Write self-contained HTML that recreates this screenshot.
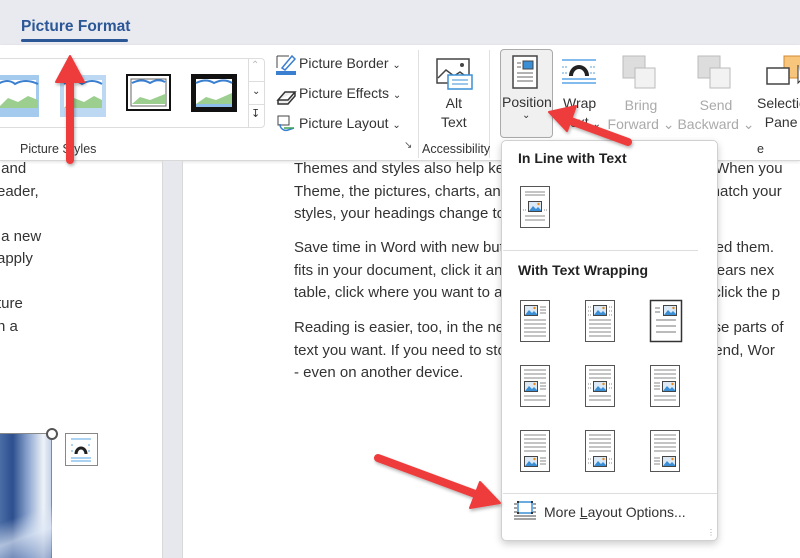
<!DOCTYPE html>
<html><head><meta charset="utf-8"><style>
*{margin:0;padding:0;box-sizing:border-box}
body{width:800px;height:558px;overflow:hidden;position:relative;background:#fff;font-family:"Liberation Sans",sans-serif;color:#262626}
.abs{position:absolute}
.tabbar{left:0;top:0;width:800px;height:45px;background:#e9eaef}
.ribbon{left:0;top:45px;width:800px;height:116px;background:#fff;border-bottom:1px solid #d8d8d8;box-shadow:0 1px 3px rgba(0,0,0,.12)}
.lbl{font-size:12.5px;color:#333}
.doc{font-size:15px;color:#333;line-height:22.5px;white-space:nowrap}
.menu{left:501px;top:140px;width:217px;height:401px;background:#fff;border:1px solid #d0d0d0;border-radius:5px;box-shadow:0 3px 8px rgba(0,0,0,.2)}
.h{font-weight:bold;font-size:14px;color:#222}
</style></head><body>
<svg width="0" height="0" style="position:absolute"><defs>
<symbol id="pg" viewBox="0 0 30 42"><rect x="0.5" y="0.5" width="29" height="41" fill="#fff" stroke="#555"/></symbol>
<symbol id="pic" viewBox="0 0 14 11"><rect x="0.5" y="0.5" width="13" height="10" fill="#dbe9f7" stroke="#444"/><path d="M1 10 L5 5 L8 8 L10 6 L13 9 L13 10Z" fill="#3a8fd6"/><circle cx="10.5" cy="3" r="1.2" fill="#e98a1d"/></symbol>
</defs></svg>

<div class="abs tabbar"></div>
<div class="abs" style="left:21px;top:18px;font-size:15.5px;font-weight:bold;color:#2b5797">Picture Format</div>
<div class="abs" style="left:21px;top:39px;width:107px;height:3px;background:#2b5797;border-radius:2px"></div>

<div class="abs ribbon"></div>
<div class="abs" style="left:-5px;top:58px;width:270px;height:70px;border:1px solid #ddd;border-radius:4px"></div>
<div class="abs" style="left:248px;top:58px;width:1px;height:70px;background:#ddd"></div>
<div class="abs" style="left:249px;top:81px;width:16px;height:1px;background:#ddd"></div>
<div class="abs" style="left:249px;top:104px;width:16px;height:1px;background:#ddd"></div>
<div class="abs" style="left:251px;top:60px;font-size:10px;color:#bbb">&#8963;</div>
<div class="abs" style="left:252px;top:86px;font-size:10px;color:#333">&#8964;</div>
<div class="abs" style="left:251px;top:107px;font-size:11px;color:#333">&#8615;</div>
<svg class="abs" style="left:0;top:70px" width="245" height="52">
<rect x="-2" y="5" width="41" height="42" fill="#8dbde9" opacity=".8"/>
<rect x="-2" y="10" width="38" height="28" fill="#fff"/><path d="M-2 38 L8 28 18 32 28 26 38 30 38 38Z" fill="#9ccf8f"/><path d="M-2 14 Q8 8 15 14 Q25 8 38 14" stroke="#3a7fd0" fill="none" stroke-width="2"/>
<rect x="60" y="5" width="46" height="42" fill="#9fc8ee" opacity=".7"/>
<rect x="64" y="10" width="38" height="28" fill="#fff"/><path d="M64 38 L74 28 84 32 94 26 102 30 102 38Z" fill="#9ccf8f"/><path d="M64 14 Q74 8 82 14 Q92 8 102 14" stroke="#3a7fd0" fill="none" stroke-width="2"/>
<rect x="127" y="5" width="43" height="35" fill="#fff" stroke="#111" stroke-width="2"/><rect x="131" y="9" width="35" height="27" fill="#fff" stroke="#666"/><path d="M132 34 L140 27 150 30 165 24 165 34Z" fill="#9ccf8f"/><path d="M132 13 Q142 8 150 13 Q158 8 165 12" stroke="#3a7fd0" fill="none" stroke-width="2"/>
<rect x="191" y="4" width="46" height="38" fill="#111"/><rect x="196" y="9" width="36" height="28" fill="#fff"/><path d="M196 34 L206 27 216 30 232 23 232 34Z" fill="#9ccf8f"/><rect x="196" y="34" width="36" height="3" fill="#8dbde9"/><path d="M196 13 Q206 8 214 13 Q224 8 232 13" stroke="#3a7fd0" fill="none" stroke-width="2"/>
</svg>
<div class="abs lbl" style="left:20px;top:142px">Picture Styles</div>

<svg class="abs" style="left:274px;top:52px" width="24" height="80">
<path d="M3 4 H15 M3 4 V16" stroke="#444" fill="none"/><path d="M8 16 L18 4 L21 7 L11 18Z" stroke="#3a7fd0" fill="#fff" stroke-width="1.5"/><rect x="2" y="19" width="20" height="4" fill="#3a7fd0"/>
<path d="M4 48 L11 40 H21 L14 48Z M4 48 V52 H14 L21 44 V40" stroke="#333" fill="#eee" stroke-width="1.5"/>
<rect x="4" y="64" width="11" height="9" fill="#fff" stroke="#444"/><path d="M6 72 A6 6 0 0 0 14 78 L20 76" stroke="#3a7fd0" fill="none" stroke-width="1.5"/><path d="M10 76 L20 76" stroke="#3aa655" stroke-width="1.5"/>
</svg>
<div class="abs" style="left:299px;top:55px;font-size:14px;color:#333">Picture Border <span style="font-size:10px">&#8964;</span></div>
<div class="abs" style="left:299px;top:85px;font-size:14px;color:#333">Picture Effects <span style="font-size:10px">&#8964;</span></div>
<div class="abs" style="left:299px;top:115px;font-size:14px;color:#333">Picture Layout <span style="font-size:10px">&#8964;</span></div>
<div class="abs" style="left:404px;top:140px;font-size:10px;color:#555">&#8600;</div>
<div class="abs" style="left:418px;top:50px;width:1px;height:108px;background:#e0e0e0"></div>
<div class="abs" style="left:489px;top:50px;width:1px;height:108px;background:#e0e0e0"></div>

<svg class="abs" style="left:436px;top:58px" width="38" height="34"><rect x="1" y="1" width="32" height="24" fill="#fff" stroke="#444" stroke-width="1.5"/><path d="M2 20 L10 12 18 18 24 14 32 20" stroke="#444" fill="none" stroke-width="1.5"/><circle cx="26" cy="7" r="2" fill="#444"/><rect x="12" y="17" width="24" height="14" fill="#fff" stroke="#3a8fd6" stroke-width="1.5"/><path d="M16 22 H32 M16 26 H32" stroke="#3a8fd6"/></svg>
<div class="abs" style="left:441px;top:94px;font-size:14px;color:#333;text-align:center;line-height:19px">Alt<br>Text</div>
<div class="abs lbl" style="left:422px;top:142px">Accessibility</div>

<div class="abs" style="left:500px;top:49px;width:53px;height:89px;background:#f0f0f0;border:1px solid #aaa;border-radius:4px"></div>
<svg class="abs" style="left:512px;top:55px" width="28" height="34"><rect x="1" y="1" width="24" height="32" fill="#fff" stroke="#444" stroke-width="1.5"/><rect x="11" y="6" width="10" height="8" fill="#3a8fd6" stroke="#444"/><path d="M5 8 H9 M5 12 H9 M5 18 H21 M5 22 H21 M5 26 H21" stroke="#666"/></svg>
<div class="abs" style="left:502px;top:94px;font-size:14px;color:#333">Position</div>
<div class="abs" style="left:522px;top:110px;font-size:10px;color:#333">&#8964;</div>
<svg class="abs" style="left:562px;top:58px" width="36" height="26"><path d="M0 2 H34 M0 21 H34 M0 25 H34" stroke="#5aa6e6" stroke-width="1.5"/><path d="M0 9 H6 M28 9 H34 M0 15 H6 M28 15 H34" stroke="#5aa6e6" stroke-dasharray="2 1"/><path d="M9 18 A8 9 0 0 1 25 18" stroke="#222" stroke-width="4" fill="none"/></svg>
<div class="abs" style="left:563px;top:94px;font-size:14px;color:#333;line-height:19px">Wrap<br>Text <span style="font-size:10px">&#8964;</span></div>
<svg class="abs" style="left:620px;top:53px" width="40" height="40"><rect x="3" y="3" width="22" height="22" fill="#ddd" stroke="#bbb"/><rect x="15" y="15" width="20" height="20" fill="#f2f2f2" stroke="#bbb"/></svg>
<div class="abs" style="left:606px;top:96px;font-size:14px;color:#aaa;text-align:center;line-height:19px;width:70px">Bring<br>Forward &#8964;</div>
<svg class="abs" style="left:695px;top:53px" width="40" height="40"><rect x="3" y="3" width="22" height="22" fill="#ddd" stroke="#bbb"/><rect x="15" y="15" width="20" height="20" fill="#f2f2f2" stroke="#bbb"/></svg>
<div class="abs" style="left:676px;top:96px;font-size:14px;color:#aaa;text-align:center;line-height:19px;width:80px">Send<br>Backward &#8964;</div>
<svg class="abs" style="left:764px;top:53px" width="36" height="36"><rect x="20" y="3" width="20" height="22" fill="#f8c57c" stroke="#d08a30"/><rect x="3" y="15" width="22" height="16" fill="#fff" stroke="#444" stroke-width="1.5"/><path d="M34 12 L34 30 L38 26" stroke="#333" fill="#fff"/></svg>
<div class="abs" style="left:757px;top:94px;font-size:14px;color:#333;line-height:19px">Selectio<br>&nbsp;&nbsp;Pane</div>
<div class="abs lbl" style="left:757px;top:142px">e</div>

<div class="abs" style="left:162px;top:161px;width:21px;height:397px;background:#e6e8ee;border-left:1px solid #d8d8d8;border-right:1px solid #d8d8d8"></div>
<div class="abs doc" style="left:-3px;top:158px">&nbsp;and<br>eader,<br><br>&nbsp;a new<br>apply<br><br>ture<br>n a</div>
<div class="abs" style="left:0;top:433px;width:52px;height:125px;border-right:1px solid #888;border-top:1px solid #888;background:linear-gradient(90deg,#4a6da6 0%,#2d4f8e 25%,#8da6cf 55%,#eef2f8 85%,#c7d3e8 100%)"></div>
<div class="abs" style="left:0;top:500px;width:52px;height:58px;background:linear-gradient(160deg,rgba(255,255,255,0) 30%,rgba(220,230,245,.7) 60%,rgba(90,120,175,.5))"></div>
<div class="abs" style="left:46px;top:428px;width:12px;height:12px;border:2px solid #555;border-radius:50%;background:#fff"></div>
<svg class="abs" style="left:65px;top:433px" width="33" height="33"><rect x=".5" y=".5" width="32" height="32" fill="#fff" stroke="#888"/><path d="M6 6 H26 M6 25 H26 M6 28 H26" stroke="#5aa6e6"/><path d="M6 12 H9 M23 12 H26 M6 18 H9 M23 18 H26" stroke="#5aa6e6" stroke-dasharray="2 1"/><path d="M11 21 A5 6 0 0 1 21 21" stroke="#222" stroke-width="3" fill="none"/></svg>

<div class="abs doc" style="left:294px;top:158px">Themes and styles also help keep your document coordinated. When you<br>Theme, the pictures, charts, and SmartArt graphics change to match your<br>styles, your headings change to match the new theme.</div>
<div class="abs doc" style="left:294px;top:237px">Save time in Word with new buttons that show up where you need them.<br>fits in your document, click it and a button for layout options appears nex<br>table, click where you want to add a row or a column, and then click the p</div>
<div class="abs doc" style="left:294px;top:317px">Reading is easier, too, in the new Reading view. You can collapse parts of<br>text you want. If you need to stop reading before you reach the end, Wor<br>- even on another device.</div>

<div class="abs menu"></div>
<div class="abs h" style="left:518px;top:150px">In Line with Text</div>
<div class="abs" style="left:503px;top:250px;width:195px;height:1px;background:#ddd"></div>
<div class="abs h" style="left:518px;top:262px">With Text Wrapping</div>
<div class="abs" style="left:503px;top:493px;width:214px;height:1px;background:#ddd"></div>
<svg class="abs" style="left:510px;top:180px" width="190" height="300">
<g transform="translate(10,6)"><use href="#pg" width="30" height="42"/><path d="M5 6H25M5 9H25M5 30H25M5 34H25" stroke="#888"/><use href="#pic" x="8" y="15" width="14" height="11"/><path d="M3 24H6M24 24H27" stroke="#888" stroke-dasharray="1 1"/></g>
<g transform="translate(10,120)"><use href="#pg" width="30" height="42"/><use href="#pic" x="4" y="5" width="14" height="11"/><path d="M20 7H26M20 10H26M20 13H26M4 20H26M4 24H26M4 28H26M4 32H26M4 36H26" stroke="#888"/></g>
<g transform="translate(75,120)"><use href="#pg" width="30" height="42"/><use href="#pic" x="8" y="5" width="14" height="11"/><path d="M3 7H6M24 7H27M3 11H6M24 11H27M3 15H6M24 15H27" stroke="#888" stroke-dasharray="1 1"/><path d="M4 20H26M4 24H26M4 28H26M4 32H26M4 36H26" stroke="#888"/></g>
<g transform="translate(140,120)"><rect x="0.5" y="0.5" width="31" height="41" fill="#fff" stroke="#333" stroke-width="1.5"/><use href="#pic" x="13" y="5" width="14" height="11"/><path d="M5 8H10M5 12H10M6 20H26M6 26H26M6 32H26" stroke="#777"/></g>
<g transform="translate(10,185)"><use href="#pg" width="30" height="42"/><path d="M4 5H26M4 9H26M4 13H26M20 18H26M20 21H26M20 24H26M4 31H26M4 35H26" stroke="#888"/><use href="#pic" x="4" y="16" width="14" height="11"/></g>
<g transform="translate(75,185)"><use href="#pg" width="30" height="42"/><path d="M4 5H26M4 9H26M4 13H26M4 31H26M4 35H26" stroke="#888"/><path d="M3 19H6M24 19H27M3 23H6M24 23H27" stroke="#888" stroke-dasharray="1 1"/><use href="#pic" x="8" y="16" width="14" height="11"/></g>
<g transform="translate(140,185)"><use href="#pg" width="30" height="42"/><path d="M4 5H26M4 9H26M4 13H26M4 18H10M4 21H10M4 24H10M4 31H26M4 35H26" stroke="#888"/><use href="#pic" x="12" y="16" width="14" height="11"/></g>
<g transform="translate(10,250)"><use href="#pg" width="30" height="42"/><path d="M4 5H26M4 9H26M4 13H26M4 17H26M4 21H26M20 28H26M20 31H26M20 34H26" stroke="#888"/><use href="#pic" x="4" y="26" width="14" height="11"/></g>
<g transform="translate(75,250)"><use href="#pg" width="30" height="42"/><path d="M4 5H26M4 9H26M4 13H26M4 17H26M4 21H26" stroke="#888"/><path d="M3 29H6M24 29H27M3 33H6M24 33H27" stroke="#888" stroke-dasharray="1 1"/><use href="#pic" x="8" y="26" width="14" height="11"/></g>
<g transform="translate(140,250)"><use href="#pg" width="30" height="42"/><path d="M4 5H26M4 9H26M4 13H26M4 17H26M4 21H26M4 28H10M4 31H10M4 34H10" stroke="#888"/><use href="#pic" x="12" y="26" width="14" height="11"/></g>
</svg>
<svg class="abs" style="left:514px;top:500px" width="22" height="22"><rect x="4" y="2" width="14" height="11" fill="#fff" stroke="#3a8fd6" stroke-width="1.5"/><path d="M0 4H3M0 8H3M0 12H3M19 4H22M19 8H22M19 12H22M0 16H22M0 19H22" stroke="#444"/><rect x="3" y="1" width="2" height="2" fill="#333"/><rect x="17" y="1" width="2" height="2" fill="#333"/><rect x="3" y="12" width="2" height="2" fill="#333"/><rect x="17" y="12" width="2" height="2" fill="#333"/></svg>
<div class="abs" style="left:544px;top:504px;font-size:14px;color:#333">More <u>L</u>ayout Options...</div>
<div class="abs" style="left:707px;top:528px;font-size:8px;color:#999">&#8942;</div>

<svg class="abs" style="left:0;top:0" width="800" height="558">
<defs><filter id="sh"><feDropShadow dx="1" dy="2" stdDeviation="1.5" flood-opacity=".3"/></filter></defs>
<g fill="#ee3b3b" stroke="#ee3b3b" stroke-linecap="round" filter="url(#sh)">
<line x1="70" y1="160" x2="70" y2="75" stroke-width="8"/>
<polygon points="70,56 56,82 84,82" stroke-width="2" stroke-linejoin="round"/>
<line x1="628" y1="142" x2="568" y2="120" stroke-width="8"/>
<polygon points="549,112 576,106 567,131" stroke-width="2" stroke-linejoin="round"/>
<line x1="378" y1="458" x2="478" y2="495" stroke-width="8"/>
<polygon points="500,503 470,508 480,482" stroke-width="2" stroke-linejoin="round"/>
</g></svg>
</body></html>
